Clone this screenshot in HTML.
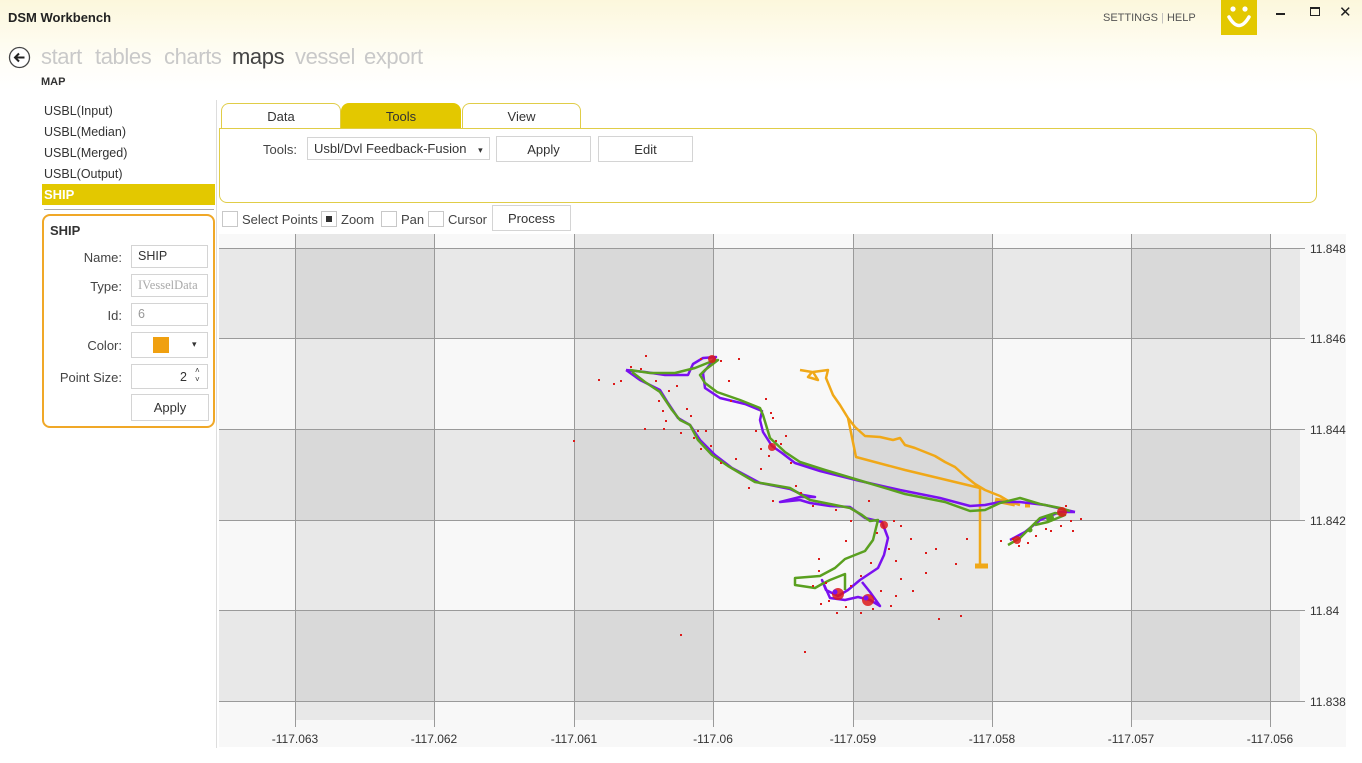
<!DOCTYPE html>
<html><head><meta charset="utf-8"><style>
*{margin:0;padding:0;box-sizing:border-box}
body{width:1362px;height:763px;overflow:hidden;position:relative;font-family:"Liberation Sans",sans-serif;background:#fff;color:#333}
.a{position:absolute}
.top{left:0;top:0;width:1362px;height:90px;background:linear-gradient(#fcf7dc,#fffef8 70%,#fff)}
.nav{font-size:22px;color:#c9c9c9;top:44px;letter-spacing:-0.4px}
.li{left:44px;font-size:12.5px;color:#333}
.btn{border:1px solid #d4d4d4;background:#fff;font-size:13px;text-align:center;color:#333}
.cb{width:16px;height:16px;border:1px solid #c8c8c8;background:#fff}
.lbl{font-size:13px;color:#444;text-align:right;width:80px}
.inp{border:1px solid #d4d4d4;background:#fff;font-size:12.5px;padding-left:6px;line-height:20px;height:23px;left:131px;width:77px}
.tab{top:103px;height:26px;border:1px solid #e0cd48;border-bottom:none;border-radius:8px 8px 0 0;font-size:13px;text-align:center;line-height:26px;background:#fff}
</style></head><body>
<div class="a top"></div>
<div class="a" style="left:8px;top:10px;font-size:13px;font-weight:bold;color:#222">DSM Workbench</div>
<div class="a" style="left:1103px;top:12px;font-size:11px;color:#555">SETTINGS <span style="color:#bbb">|</span> HELP</div>
<div class="a" style="left:1221px;top:0;width:36px;height:35px;background:#e3c800"></div>
<svg class="a" style="left:1221px;top:0" width="36" height="35"><circle cx="12" cy="9" r="2.6" fill="#fff"/><circle cx="24" cy="9" r="2.6" fill="#fff"/><path d="M8 17 Q18 34 28 17" stroke="#fff" stroke-width="3.5" fill="none" stroke-linecap="round"/></svg>
<div class="a" style="left:1276px;top:13px;width:9px;height:2px;background:#222"></div>
<div class="a" style="left:1310px;top:7px;width:10px;height:9px;border:1.5px solid #222;border-top-width:2.5px"></div>
<div class="a" style="left:1339px;top:3px;font-size:15px;color:#222">✕</div>
<svg class="a" style="left:8px;top:46px" width="24" height="24"><circle cx="11.5" cy="11.5" r="10" fill="#fff" stroke="#444" stroke-width="1.3"/><path d="M16.5 11.5H7.5M11 7.5L7 11.5L11 15.5" stroke="#222" stroke-width="2" fill="none"/></svg>
<div class="a nav" style="left:41px">start</div>
<div class="a nav" style="left:95px">tables</div>
<div class="a nav" style="left:164px">charts</div>
<div class="a nav" style="left:232px;color:#444">maps</div>
<div class="a nav" style="left:295px">vessel</div>
<div class="a nav" style="left:364px">export</div>
<div class="a" style="left:41px;top:76px;font-size:11px;font-weight:bold;color:#333">MAP</div>

<div class="a li" style="top:104px">USBL(Input)</div>
<div class="a li" style="top:125px">USBL(Median)</div>
<div class="a li" style="top:146px">USBL(Merged)</div>
<div class="a li" style="top:167px">USBL(Output)</div>
<div class="a" style="left:42px;top:184px;width:173px;height:21px;background:#e3c800"></div>
<div class="a" style="left:44px;top:187px;font-size:13px;font-weight:bold;color:#fff">SHIP</div>
<div class="a" style="left:44px;top:209px;width:170px;height:1px;background:#aaa"></div>
<div class="a" style="left:42px;top:214px;width:173px;height:214px;border:2px solid #f0a828;border-radius:8px"></div>
<div class="a" style="left:50px;top:223px;font-size:13px;font-weight:bold;color:#333">SHIP</div>
<div class="a lbl" style="left:42px;top:250px">Name:</div>
<div class="a lbl" style="left:42px;top:279px">Type:</div>
<div class="a lbl" style="left:42px;top:308px">Id:</div>
<div class="a lbl" style="left:42px;top:338px">Color:</div>
<div class="a lbl" style="left:42px;top:370px">Point Size:</div>
<div class="a inp" style="top:245px">SHIP</div>
<div class="a inp" style="top:274px;color:#aaa;font-family:'Liberation Serif',serif;overflow:hidden;white-space:nowrap">IVesselData</div>
<div class="a inp" style="top:303px;color:#999">6</div>
<div class="a inp" style="top:332px;height:26px"></div>
<div class="a" style="left:153px;top:337px;width:16px;height:16px;background:#f0a010"></div>
<div class="a" style="left:192px;top:339px;font-size:9px;color:#333">▾</div>
<div class="a inp" style="top:364px;height:25px;text-align:right;padding-right:20px;line-height:24px">2</div>
<div class="a" style="left:195px;top:366px;font-size:8px;line-height:9px;color:#333">˄<br>˅</div>
<div class="a btn" style="left:131px;top:394px;width:78px;height:27px;line-height:26px">Apply</div>

<div class="a" style="left:216px;top:100px;width:1px;height:648px;background:#ddd"></div>

<div class="a tab" style="left:221px;width:120px">Data</div>
<div class="a tab" style="left:341px;width:120px;background:#e3c800;border-color:#e3c800">Tools</div>
<div class="a tab" style="left:462px;width:119px">View</div>
<div class="a" style="left:219px;top:128px;width:1098px;height:75px;border:1px solid #e0cd48;border-radius:0 8px 8px 8px"></div>
<div class="a" style="left:263px;top:142px;font-size:13px;color:#444">Tools:</div>
<div class="a btn" style="left:307px;top:137px;width:183px;height:23px;line-height:22px;text-align:left;padding-left:6px">Usbl/Dvl Feedback-Fusion <span style="font-size:9px;margin-left:8px">▾</span></div>
<div class="a btn" style="left:496px;top:136px;width:95px;height:26px;line-height:25px">Apply</div>
<div class="a btn" style="left:598px;top:136px;width:95px;height:26px;line-height:25px">Edit</div>

<div class="a cb" style="left:222px;top:211px"></div>
<div class="a" style="left:242px;top:212px;font-size:13px;color:#444">Select Points</div>
<div class="a cb" style="left:321px;top:211px"><div style="margin:4px;width:6px;height:6px;background:#333"></div></div>
<div class="a" style="left:341px;top:212px;font-size:13px;color:#444">Zoom</div>
<div class="a cb" style="left:381px;top:211px"></div>
<div class="a" style="left:401px;top:212px;font-size:13px;color:#444">Pan</div>
<div class="a cb" style="left:428px;top:211px"></div>
<div class="a" style="left:448px;top:212px;font-size:13px;color:#444">Cursor</div>
<div class="a btn" style="left:492px;top:205px;width:79px;height:26px;line-height:25px">Process</div>

<svg class="a" style="left:0;top:0" width="1362" height="763">
<rect x="219" y="234" width="1127" height="513" fill="#f8f8f8"/>
<g fill="#000" fill-opacity="0.063">
<rect x="295" y="234" width="139" height="486"/><rect x="574" y="234" width="139" height="486"/><rect x="853" y="234" width="139" height="486"/><rect x="1131" y="234" width="139" height="486"/>
<rect x="219" y="248" width="1081" height="90"/><rect x="219" y="429" width="1081" height="91"/><rect x="219" y="610" width="1081" height="91"/>
</g>
<g stroke="#9a9a9a" stroke-width="1">
<path d="M295.5 234V727M434.5 234V727M574.5 234V727M713.5 234V727M853.5 234V727M992.5 234V727M1131.5 234V727M1270.5 234V727"/>
<path d="M219 248.5H1305M219 338.5H1305M219 429.5H1305M219 520.5H1305M219 610.5H1305M219 701.5H1305"/>
</g>
<g font-size="12" fill="#333" font-family="Liberation Sans,sans-serif">
<text x="1310" y="253">11.848</text><text x="1310" y="343">11.846</text><text x="1310" y="434">11.844</text><text x="1310" y="525">11.842</text><text x="1310" y="615">11.84</text><text x="1310" y="706">11.838</text>
<g text-anchor="middle"><text x="295" y="743">-117.063</text><text x="434" y="743">-117.062</text><text x="574" y="743">-117.061</text><text x="713" y="743">-117.06</text><text x="853" y="743">-117.059</text><text x="992" y="743">-117.058</text><text x="1131" y="743">-117.057</text><text x="1270" y="743">-117.056</text></g>
</g>
<g fill="none" stroke-linejoin="round">
<path stroke="#f0a818" stroke-width="2.5" d="M800 370L812 372L808 377L818 380L813 372L828 370L826 378L833 395L840 405L848 418L855 427L865 436L880 437L893 440L900 438L905 445L915 448L925 452L935 456L945 462L955 467L965 476L975 484L985 490L1000 496L1010 502L1020 505M848 418L856 457L905 470L980 488L980 568"/>
<path stroke="#f0a818" stroke-width="5" d="M975 566H988M995 500L1015 504M1025 505H1030"/>
<path stroke="#7a10f0" stroke-width="2.5" d="M626 370L645 372L665 375L688 375L693 364L703 358L716 357L703 373L705 388L720 398L745 404L762 411L760 420L763 432L772 446L782 453L795 463L820 471L860 481L900 490L940 498L970 506L985 505L1000 502L1020 502L1045 505L1075 512M626 370L640 380L660 390L668 403L678 418L690 425L700 440L715 455L732 468L760 483L790 489L803 495L815 497L800 497L780 502L800 500L810 503L830 506L850 507L865 518L882 522L888 538L884 555L878 568L860 580L848 590L838 596L826 590L822 580L830 598L845 600L858 597L870 600L880 606L870 592L862 582M1010 540L1025 532L1040 520L1060 512L1075 512"/>
<path stroke="#5aa020" stroke-width="2.5" d="M630 370L650 373L675 373L695 368L710 362L718 360L705 370L700 375L705 383L717 392L740 400L760 408L763 415L770 438L785 452L800 462L825 470L865 482L905 494L945 502L970 511L985 510L1000 503L1020 498L1040 504L1060 508L1070 511M632 372L645 382L660 392L672 410L680 420L690 425L698 440L712 455L728 466L755 482L790 488L810 500L830 504L850 508L862 515L870 521L878 520L873 540L865 551L845 559L835 568L820 576L795 578L795 585L815 588L822 584L830 580L845 574L845 590M1008 545L1020 538L1030 528L1040 518L1055 513L1065 515L1048 522L1035 525"/>
</g>
<g fill="#dd1a1a">
<rect x="645" y="355" width="2" height="2"/><rect x="598" y="379" width="2" height="2"/><rect x="613" y="383" width="2" height="2"/><rect x="573" y="440" width="2" height="2"/><rect x="644" y="428" width="2" height="2"/><rect x="663" y="428" width="2" height="2"/><rect x="680" y="634" width="2" height="2"/><rect x="804" y="651" width="2" height="2"/><rect x="676" y="385" width="2" height="2"/><rect x="658" y="400" width="2" height="2"/><rect x="690" y="415" width="2" height="2"/><rect x="680" y="432" width="2" height="2"/><rect x="710" y="445" width="2" height="2"/><rect x="735" y="458" width="2" height="2"/><rect x="760" y="468" width="2" height="2"/><rect x="748" y="487" width="2" height="2"/><rect x="790" y="462" width="2" height="2"/><rect x="772" y="500" width="2" height="2"/><rect x="812" y="505" width="2" height="2"/><rect x="835" y="509" width="2" height="2"/><rect x="868" y="500" width="2" height="2"/><rect x="900" y="525" width="2" height="2"/><rect x="910" y="538" width="2" height="2"/><rect x="895" y="560" width="2" height="2"/><rect x="925" y="552" width="2" height="2"/><rect x="935" y="548" width="2" height="2"/><rect x="925" y="572" width="2" height="2"/><rect x="912" y="590" width="2" height="2"/><rect x="890" y="605" width="2" height="2"/><rect x="880" y="590" width="2" height="2"/><rect x="860" y="612" width="2" height="2"/><rect x="845" y="606" width="2" height="2"/><rect x="820" y="603" width="2" height="2"/><rect x="812" y="585" width="2" height="2"/><rect x="818" y="570" width="2" height="2"/><rect x="818" y="558" width="2" height="2"/><rect x="845" y="540" width="2" height="2"/><rect x="938" y="618" width="2" height="2"/><rect x="960" y="615" width="2" height="2"/><rect x="955" y="563" width="2" height="2"/><rect x="966" y="538" width="2" height="2"/><rect x="1000" y="540" width="2" height="2"/><rect x="765" y="398" width="2" height="2"/><rect x="770" y="412" width="2" height="2"/><rect x="755" y="430" width="2" height="2"/><rect x="728" y="380" width="2" height="2"/><rect x="738" y="358" width="2" height="2"/><rect x="772" y="417" width="2" height="2"/><rect x="775" y="440" width="2" height="2"/><rect x="730" y="400" width="2" height="2"/><rect x="785" y="435" width="2" height="2"/><rect x="620" y="380" width="2" height="2"/><rect x="630" y="366" width="2" height="2"/><rect x="665" y="420" width="2" height="2"/><rect x="693" y="437" width="2" height="2"/><rect x="700" y="448" width="2" height="2"/><rect x="1072" y="530" width="2" height="2"/><rect x="1080" y="518" width="2" height="2"/><rect x="1060" y="525" width="2" height="2"/><rect x="1070" y="520" width="2" height="2"/><rect x="1045" y="528" width="2" height="2"/><rect x="1035" y="535" width="2" height="2"/><rect x="1018" y="545" width="2" height="2"/><rect x="1027" y="542" width="2" height="2"/>
<rect x="655" y="380" width="2" height="2"/><rect x="668" y="390" width="2" height="2"/><rect x="662" y="410" width="2" height="2"/><rect x="686" y="408" width="2" height="2"/><rect x="697" y="430" width="2" height="2"/><rect x="705" y="430" width="2" height="2"/><rect x="720" y="462" width="2" height="2"/><rect x="795" y="485" width="2" height="2"/><rect x="800" y="492" width="2" height="2"/><rect x="850" y="520" width="2" height="2"/><rect x="876" y="532" width="2" height="2"/><rect x="893" y="520" width="2" height="2"/><rect x="888" y="548" width="2" height="2"/><rect x="870" y="562" width="2" height="2"/><rect x="860" y="575" width="2" height="2"/><rect x="900" y="578" width="2" height="2"/><rect x="850" y="585" width="2" height="2"/><rect x="828" y="600" width="2" height="2"/><rect x="872" y="608" width="2" height="2"/><rect x="895" y="595" width="2" height="2"/><rect x="836" y="612" width="2" height="2"/><rect x="825" y="582" width="2" height="2"/><rect x="760" y="448" width="2" height="2"/><rect x="768" y="455" width="2" height="2"/><rect x="780" y="443" width="2" height="2"/><rect x="720" y="360" width="2" height="2"/><rect x="700" y="358" width="2" height="2"/><rect x="640" y="368" width="2" height="2"/><rect x="1050" y="530" width="2" height="2"/><rect x="1065" y="505" width="2" height="2"/><rect x="1012" y="538" width="2" height="2"/></g>
<g fill="#dd1a1a" fill-opacity="0.85">
<circle cx="838" cy="594" r="6"/><circle cx="868" cy="600" r="6"/><circle cx="712" cy="359" r="4"/><circle cx="772" cy="447" r="4"/><circle cx="884" cy="525" r="4"/><circle cx="1062" cy="512" r="5"/><circle cx="1017" cy="540" r="4"/>
</g>
<g fill="#7a10f0"><circle cx="835" cy="592" r="2.5"/><circle cx="866" cy="598" r="2.5"/></g>
<g fill="#5aa020"><circle cx="1050" cy="518" r="4"/><circle cx="1030" cy="530" r="2.5"/></g>
</svg>
</body></html>
